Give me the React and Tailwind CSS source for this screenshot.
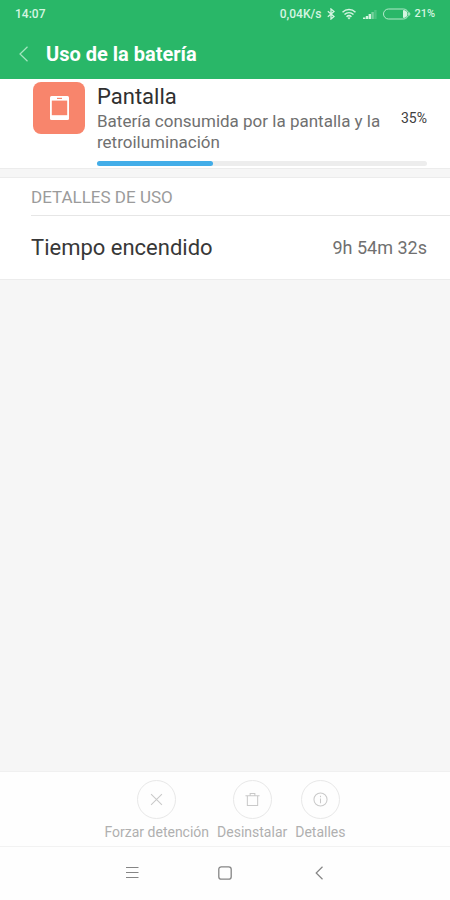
const ROBOTO = "font-['Roboto','Liberation_Sans',sans-serif]";

function StatusBar() {
  return (
    <div className="flex h-7 items-center justify-between px-[15px] text-[11px] leading-4 font-medium text-[#d5f5e1]">
      <span className="text-xs">14:07</span>
      <div className="flex items-center">
        <span className="text-xs">0,04K/s</span>
        <svg className="ml-1.5 h-3 w-2" viewBox="0 0 8 12" fill="none" stroke="currentColor" strokeWidth="1.3" aria-hidden="true">
          <path d="M0.8 3.3 L7 8.5 L4 11 V1 L7 3.5 L0.8 8.7" />
        </svg>
        <svg className="ml-[7px] h-3 w-[14px]" viewBox="0 0 14 12" fill="none" stroke="currentColor" strokeWidth="1.5" aria-hidden="true">
          <path d="M0.5 4.2 C4.2 0.6 9.8 0.6 13.5 4.2" />
          <path d="M2.5 6.5 C5.1 4.1 8.9 4.1 11.5 6.5" />
          <path d="M4.5 8.7 C6 7.4 8 7.4 9.5 8.7" />
          <path d="M5.4 9.7 Q7 8.6 8.6 9.7 L7 11.5 Z" fill="currentColor" stroke="none" />
        </svg>
        <svg className="ml-[7px] h-3 w-[14px]" viewBox="0 0 14 12" fill="currentColor" aria-hidden="true">
          <rect x="0" y="9.5" width="2.4" height="1.5" />
          <rect x="2.8" y="8" width="2.4" height="3" />
          <rect x="5.6" y="6" width="2.4" height="5" />
          <rect x="8.4" y="4" width="2.4" height="7" opacity="0.45" />
          <rect x="11.2" y="2" width="2.4" height="9" opacity="0.2" />
        </svg>
        <svg className="ml-1.5 h-3 w-7" viewBox="0 0 28 12" fill="none" aria-hidden="true">
          <rect x="0.5" y="1" width="25" height="10" rx="5" stroke="currentColor" opacity="0.8" />
          <path d="M20.5 2.5 A3.5 3.5 0 0 1 20.5 9.5 Z" fill="currentColor" stroke="currentColor" />
          <path d="M26.3 4 Q28.3 6 26.3 8 Z" fill="currentColor" />
        </svg>
        <span className="ml-[3px]">21%</span>
      </div>
    </div>
  );
}

function Header() {
  return (
    <header className="bg-[#29b768]">
      <StatusBar />
      <div className="flex h-[51px] items-center pl-[18px]">
        <button type="button" aria-label="Atrás" className="flex h-10 w-7 items-center text-[#a5e6c0]">
          <svg className="h-4 w-[11px]" viewBox="0 0 11 16" fill="none" stroke="currentColor" strokeWidth="1.2" aria-hidden="true">
            <path d="M9.5 0.8 L2 8 L9.5 15.2" />
          </svg>
        </button>
        <h1 className="text-[20px] leading-6 font-bold text-white">Uso de la batería</h1>
      </div>
    </header>
  );
}

function UsageSummary() {
  return (
    <section className="flex gap-3 border-b border-[#ececec] bg-white pt-[3px] pr-[23px] pb-[2px] pl-[33px]">
      <svg className="h-[52px] w-[52px] shrink-0" viewBox="0 0 52 52" aria-hidden="true">
        <rect width="52" height="52" rx="8" fill="#f8856c" />
        <rect x="17" y="14" width="19" height="24" rx="1.5" fill="#fff" />
        <rect x="18.8" y="18.6" width="15.4" height="14.6" fill="#f8856c" />
        <rect x="24" y="15.8" width="5" height="1.2" fill="#f8856c" />
      </svg>
      <div className="min-w-0 flex-1">
        <div className="flex items-center justify-between gap-2">
          <div className="min-w-0">
            <h2 className="text-[22px] leading-[29px] text-[#303030]">Pantalla</h2>
            <p className="text-[17px] leading-[21px] text-[#707070]">
              Batería consumida por la pantalla y la retroiluminación
            </p>
          </div>
          <span className="text-[14px] leading-5 text-[#404040]">35%</span>
        </div>
        <div
          role="progressbar"
          aria-label="Consumo de la pantalla"
          aria-valuenow={35}
          aria-valuemin={0}
          aria-valuemax={100}
          className="mt-2 h-[5px] rounded-full bg-[#ededed]"
        >
          <div className="h-full w-[35%] rounded-full bg-[#43ade8]" />
        </div>
      </div>
    </section>
  );
}

function UsageDetails() {
  return (
    <section className="mt-2 border-y border-[#ececec] bg-white pl-[31px]">
      <h3 className="border-b border-[#e6e6e6] pt-[9px] pb-[7px] text-[17px] leading-[21px] text-[#9b9b9b]">DETALLES DE USO</h3>
      <dl className="flex items-center justify-between pt-[18px] pr-[23px] pb-[17px]">
        <dt className="text-[22px] leading-7 text-[#383838]">Tiempo encendido</dt>
        <dd className="text-[18px] leading-7 text-[#707070]">9h 54m 32s</dd>
      </dl>
    </section>
  );
}

function ToolButton({ label, children }) {
  return (
    <button type="button" className="flex flex-col items-center gap-[3px] text-[#b0b0b0]">
      <span className="flex h-[39px] w-[39px] items-center justify-center rounded-full border border-[#e8e8e8]">
        <svg className="h-[15px] w-[15px]" viewBox="0 0 16 16" fill="none" stroke="#c9c9c9" strokeWidth="1.1" aria-hidden="true">
          {children}
        </svg>
      </span>
      <span className="text-[14px] leading-5">{label}</span>
    </button>
  );
}

function Toolbar() {
  return (
    <div className="flex h-[75px] justify-center gap-2 border-t border-[#f0f0f0] bg-[#fefefe] pt-2">
      <ToolButton label="Forzar detención">
        <path d="M2.2 2.2 L13.8 13.8 M13.8 2.2 L2.2 13.8" />
      </ToolButton>
      <ToolButton label="Desinstalar">
        <path d="M0.5 4 H15.5 M5.5 4 V1.5 H10.5 V4 M2.5 4 V14.5 H13.5 V4" />
      </ToolButton>
      <ToolButton label="Detalles">
        <circle cx="8" cy="8" r="7" />
        <path d="M8 4 V5.5 M8 7 V12" />
      </ToolButton>
    </div>
  );
}

function NavigationBar() {
  return (
    <nav className="flex h-[54px] items-center justify-center gap-[78px] border-t border-[#f2f2f2] bg-[#fefefe] text-[#858585]">
      <button type="button" aria-label="Menú">
        <svg className="h-4 w-4" viewBox="0 0 16 16" fill="none" stroke="currentColor" strokeWidth="1.2" aria-hidden="true">
          <path d="M3 1.5 H15.5 M3 6.5 H15.5 M3 11.5 H15.5" />
        </svg>
      </button>
      <button type="button" aria-label="Inicio">
        <svg className="h-4 w-4" viewBox="0 0 16 16" fill="none" stroke="currentColor" strokeWidth="1.3" aria-hidden="true">
          <rect x="1.8" y="0.8" width="12.4" height="12.4" rx="2.5" />
        </svg>
      </button>
      <button type="button" aria-label="Volver">
        <svg className="h-4 w-4" viewBox="0 0 16 16" fill="none" stroke="currentColor" strokeWidth="1.2" aria-hidden="true">
          <path d="M11.5 0.8 L5.2 7 L11.5 13.2" />
        </svg>
      </button>
    </nav>
  );
}

export default function App() {
  return (
    <div className={`flex min-h-screen flex-col bg-[#f6f6f6] ${ROBOTO}`}>
      <Header />
      <main className="flex-1">
        <UsageSummary />
        <UsageDetails />
      </main>
      <footer>
        <Toolbar />
        <NavigationBar />
      </footer>
    </div>
  );
}
